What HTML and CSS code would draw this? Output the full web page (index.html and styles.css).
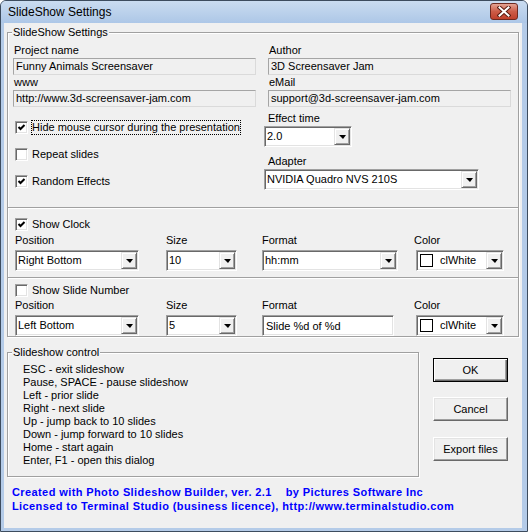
FILE: index.html
```html
<!DOCTYPE html>
<html lang="en">
<head>
    <meta charset="UTF-8">
    <title>SlideShow Settings</title>
    <link rel="stylesheet" href="styles.css">
</head>
<body>
    <div class="window">
        <div class="titlebar">
            <span class="title">SlideShow Settings</span>
            <span class="close-btn">
                <svg width="14" height="11" viewBox="0 0 14 11">
                    <path d="M2.5 1.5 L11.5 9.5 M11.5 1.5 L2.5 9.5" stroke="#5a1d12" stroke-width="4" stroke-linecap="square" fill="none"/>
                    <path d="M2.5 1.5 L11.5 9.5 M11.5 1.5 L2.5 9.5" stroke="#fff" stroke-width="2" stroke-linecap="square" fill="none"/>
                </svg>
            </span>
        </div>
        <div class="client">
            <div class="settings">
                <span class="legend">SlideShow Settings</span>

                <div class="section section-main">
                    <div class="fields">
                        <div class="field">
                            <div class="label">Project name</div>
                            <div class="static">Funny Animals Screensaver</div>
                        </div>
                        <div class="field">
                            <div class="label">Author</div>
                            <div class="static">3D Screensaver Jam</div>
                        </div>
                        <div class="field">
                            <div class="label">www</div>
                            <div class="static">http://www.3d-screensaver-jam.com</div>
                        </div>
                        <div class="field">
                            <div class="label">eMail</div>
                            <div class="static">support@3d-screensaver-jam.com</div>
                        </div>
                    </div>
                    <div class="lower">
                        <div class="checks">
                            <div class="check">
                                <span class="box"><svg width="9" height="9" viewBox="0 0 9 9"><path d="M1.5 4 L3.5 6 L7.5 2" stroke="#000" stroke-width="2" fill="none"/></svg></span>
                                <span class="check-text focused">Hide mouse cursor during the presentation</span>
                            </div>
                            <div class="check">
                                <span class="box"></span>
                                <span class="check-text">Repeat slides</span>
                            </div>
                            <div class="check">
                                <span class="box"><svg width="9" height="9" viewBox="0 0 9 9"><path d="M1.5 4 L3.5 6 L7.5 2" stroke="#000" stroke-width="2" fill="none"/></svg></span>
                                <span class="check-text">Random Effects</span>
                            </div>
                        </div>
                        <div class="options">
                            <div class="label">Effect time</div>
                            <div class="combo combo-effect"><span class="combo-text">2.0</span><span class="combo-btn"></span></div>
                            <div class="label label-adapter">Adapter</div>
                            <div class="combo combo-adapter"><span class="combo-text">NVIDIA Quadro NVS 210S</span><span class="combo-btn"></span></div>
                        </div>
                    </div>
                </div>

                <div class="section section-clock">
                    <div class="check">
                        <span class="box"><svg width="9" height="9" viewBox="0 0 9 9"><path d="M1.5 4 L3.5 6 L7.5 2" stroke="#000" stroke-width="2" fill="none"/></svg></span>
                        <span class="check-text">Show Clock</span>
                    </div>
                    <div class="overlay-row">
                        <div>
                            <div class="label">Position</div>
                            <div class="combo combo-pos"><span class="combo-text">Right Bottom</span><span class="combo-btn"></span></div>
                        </div>
                        <div>
                            <div class="label">Size</div>
                            <div class="combo combo-size"><span class="combo-text">10</span><span class="combo-btn"></span></div>
                        </div>
                        <div>
                            <div class="label">Format</div>
                            <div class="combo combo-format"><span class="combo-text">hh:mm</span><span class="combo-btn"></span></div>
                        </div>
                        <div>
                            <div class="label">Color</div>
                            <div class="combo combo-color"><span class="swatch"></span><span class="combo-text">clWhite</span><span class="combo-btn"></span></div>
                        </div>
                    </div>
                </div>

                <div class="section section-number">
                    <div class="check">
                        <span class="box"></span>
                        <span class="check-text">Show Slide Number</span>
                    </div>
                    <div class="overlay-row">
                        <div>
                            <div class="label">Position</div>
                            <div class="combo combo-pos"><span class="combo-text">Left Bottom</span><span class="combo-btn"></span></div>
                        </div>
                        <div>
                            <div class="label">Size</div>
                            <div class="combo combo-size"><span class="combo-text">5</span><span class="combo-btn"></span></div>
                        </div>
                        <div>
                            <div class="label">Format</div>
                            <div class="edit edit-format">Slide %d of %d</div>
                        </div>
                        <div>
                            <div class="label">Color</div>
                            <div class="combo combo-color"><span class="swatch"></span><span class="combo-text">clWhite</span><span class="combo-btn"></span></div>
                        </div>
                    </div>
                </div>
            </div>

            <div class="bottom">
                <div class="control-group">
                    <span class="legend">Slideshow control</span>
                    <div class="keys">
                        <div>ESC - exit slideshow</div>
                        <div>Pause, SPACE - pause slideshow</div>
                        <div>Left - prior slide</div>
                        <div>Right - next slide</div>
                        <div>Up - jump back to 10 slides</div>
                        <div>Down - jump forward to 10 slides</div>
                        <div>Home - start again</div>
                        <div>Enter, F1 - open this dialog</div>
                    </div>
                </div>
                <div class="buttons">
                    <button class="btn btn-default">OK</button>
                    <button class="btn btn-cancel">Cancel</button>
                    <button class="btn btn-export">Export files</button>
                </div>
            </div>

            <div class="footer">
                <div class="footer-line">Created with Photo Slideshow Builder, ver. 2.1    by Pictures Software Inc</div>
                <div class="footer-line">Licensed to Terminal Studio (business licence), http://www.terminalstudio.com</div>
            </div>
        </div>
    </div>
</body>
</html>
```
FILE: styles.css
```css
/* Window frame */
body {
    margin: 0;
    font-family: 'Liberation Sans', Arial, sans-serif;
    font-size: 11px;
    color: #000;
}

.window {
    width: 528px;
    height: 532px;
    box-sizing: border-box;
    border: 1px solid #3d4c5e;
    border-radius: 6px 6px 0 0;
    background: #b4cbe8;
    display: flex;
    flex-direction: column;
    overflow: hidden;
}

.titlebar {
    height: 22px;
    flex: none;
    display: flex;
    align-items: flex-start;
    justify-content: space-between;
    background: linear-gradient(#cadcf0, #adc7e7);
}

.title {
    font-size: 12px;
    line-height: 22px;
    padding-left: 7px;
}

.close-btn {
    width: 28px;
    height: 17px;
    box-sizing: border-box;
    margin-top: 2px;
    margin-right: 9px;
    border: 1px solid #6e2a20;
    border-radius: 3px;
    background: linear-gradient(#e4a393, #cc5c47 50%, #c0402b);
    display: flex;
    align-items: center;
    justify-content: center;
}

.client {
    height: 505px;
    margin: 0 5px 0 3px;
    background: #f0f0f0;
    box-sizing: border-box;
}

/* Settings group */
.settings {
    position: relative;
    width: 512px;
    height: 305px;
    margin: 9px 0 0 3px;
    box-sizing: border-box;
    border: 1px solid #a0a0a0;
    box-shadow: inset 1px 1px #fff, 1px 1px #fff;
}

.legend {
    position: absolute;
    top: -7px;
    left: 4px;
    padding: 0 1px;
    line-height: 13px;
    background: #f0f0f0;
}

.section {
    box-sizing: border-box;
}

.section + .section {
    border-top: 1px solid #a0a0a0;
    box-shadow: inset 0 1px #fff;
}

.section-main {
    height: 174px;
}

.section-clock {
    height: 70px;
    padding: 8px 0 0 7px;
}

.section-number {
    height: 59px;
    padding: 4px 0 0 7px;
}

.label {
    line-height: 13px;
    height: 13px;
    padding-left: 1px;
    white-space: nowrap;
}

.fields {
    display: grid;
    grid-template-columns: 243px 243px;
    column-gap: 12px;
    row-gap: 2px;
    padding: 11px 0 0 5px;
}

.field .label {
    margin-bottom: 1px;
}

.fields .static {
    margin-bottom: -1px;
}

.static {
    height: 17px;
    box-sizing: border-box;
    border: 1px solid #a5a5a5;
    border-right-color: #dadada;
    border-bottom-color: #dadada;
    padding-left: 2px;
    line-height: 15px;
    white-space: nowrap;
}

.lower {
    display: flex;
}

.checks {
    width: 258px;
    box-sizing: border-box;
    padding: 13px 0 0 7px;
    display: flex;
    flex-direction: column;
    gap: 10px;
}

.check {
    display: flex;
    align-items: center;
    height: 17px;
}

.section-number .check {
    height: 16px;
}

.box {
    width: 13px;
    height: 13px;
    box-sizing: border-box;
    background: #fff;
    border: 1px solid;
    border-color: #a0a0a0 #fff #fff #a0a0a0;
    box-shadow: inset 1px 1px #696969, inset -1px -1px #e3e3e3;
    display: flex;
    align-items: center;
    justify-content: center;
}

.check-text {
    margin-left: 3px;
    padding: 1px;
    line-height: 13px;
    white-space: nowrap;
}

.check-text.focused {
    outline: 1px dotted #000;
    outline-offset: -1px;
}

.options {
    padding-top: 6px;
}

.options .label {
    padding-left: 2px;
    margin-bottom: 1px;
}

.options .label-adapter {
    margin-top: 8px;
}

/* Combo boxes and edits */
.combo, .edit {
    height: 21px;
    box-sizing: border-box;
    background: #fff;
    border: 1px solid;
    border-color: #a0a0a0 #fff #fff #a0a0a0;
    box-shadow: inset 1px 1px #696969, inset -1px -1px #e3e3e3;
    padding: 1px;
    display: flex;
    align-items: center;
}

.combo-text {
    flex: 1;
    padding-left: 1px;
    line-height: 17px;
    white-space: nowrap;
    overflow: hidden;
}

.combo-btn {
    width: 16px;
    height: 17px;
    box-sizing: border-box;
    background: #f0f0f0;
    border: 1px solid;
    border-color: #e3e3e3 #696969 #696969 #e3e3e3;
    box-shadow: inset 1px 1px #fff, inset -1px -1px #a0a0a0;
    display: flex;
    align-items: center;
    justify-content: center;
}

.combo-btn::after {
    content: "";
    border-top: 4px solid #000;
    border-left: 4px solid transparent;
    border-right: 3px solid transparent;
    margin-top: 1px;
}

.combo-effect {
    width: 88px;
    margin-left: -2px;
}

.combo-adapter {
    width: 215px;
    margin-left: -2px;
}

.overlay-row {
    display: grid;
    grid-template-columns: 151px 96px 152px auto;
    margin-top: 1px;
}

.overlay-row .label {
    padding-left: 0;
    margin-bottom: 3px;
}

.combo-pos {
    width: 124px;
}

.combo-size {
    width: 71px;
}

.combo-format {
    width: 136px;
}

.edit-format {
    width: 132px;
    padding-left: 3px;
    white-space: nowrap;
}

.combo-color {
    width: 88px;
    margin-left: 2px;
}

.swatch {
    width: 13px;
    height: 13px;
    box-sizing: border-box;
    border: 1px solid #000;
    background: #fff;
    margin: 0 6px 0 2px;
}

/* Slideshow control + buttons */
.bottom {
    display: flex;
    margin-top: 15px;
}

.control-group {
    position: relative;
    width: 412px;
    height: 125px;
    margin-left: 3px;
    box-sizing: border-box;
    border: 1px solid #a0a0a0;
    box-shadow: inset 1px 1px #fff, 1px 1px #fff;
    padding: 10px 0 0 15px;
}

.keys {
    line-height: 13px;
}

.buttons {
    display: flex;
    flex-direction: column;
    margin-left: 14px;
}

.btn {
    width: 75px;
    height: 24px;
    box-sizing: border-box;
    font-family: inherit;
    font-size: 11px;
    color: #000;
    background: #f0f0f0;
    border: 1px solid;
    border-color: #fff #696969 #696969 #fff;
    box-shadow: inset -1px -1px #a0a0a0, inset 1px 1px #e3e3e3;
    padding: 0;
}

.btn-default {
    margin-top: 6px;
    border-color: #000;
    box-shadow: inset 1px 1px #fff, inset -1px -1px #696969, inset -2px -2px #a0a0a0;
}

.btn-cancel {
    margin-top: 15px;
}

.btn-export {
    margin-top: 16px;
}

.footer {
    margin-top: 8px;
    padding-left: 8px;
    color: #0000ff;
    font-weight: bold;
    line-height: 14px;
    letter-spacing: 0.4px;
}

.footer-line {
    white-space: pre;
}
```
